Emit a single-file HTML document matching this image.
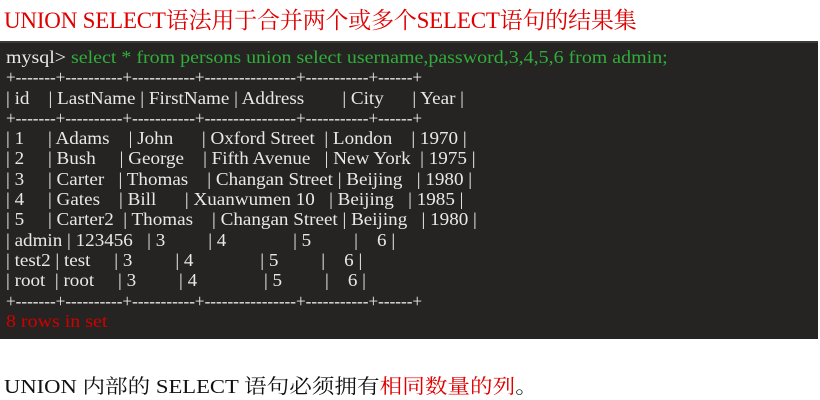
<!DOCTYPE html>
<html><head><meta charset="utf-8"><style>
body{margin:0;width:820px;height:400px;background:#fff;position:relative;overflow:hidden;font-family:"Liberation Serif","Noto Serif CJK SC",serif}
.t{position:absolute;left:4px;top:2px;font-size:23px;color:#e00000;white-space:nowrap;letter-spacing:-0.2px}
.box{position:absolute;left:0;top:41px;width:818px;height:296px;background:#262422;border-top:2px solid #3a3a3a}
.pre{position:absolute;left:6px;top:4px;font-size:17.5px;line-height:20.3px;color:#e8e8e8;white-space:pre}
.pre div{transform-origin:0 0;transform:scaleX(1.09);height:20.3px}
.pre div.f{transform:scaleX(1.14)}
.pre div.s{transform:scaleX(0.98)}
.g{color:#2fae3a}.r{color:#d00000}
.b{position:absolute;left:4px;top:370px;font-size:20px;color:#111;white-space:nowrap;transform-origin:0 0;transform:scaleX(1.13)}
.b span{color:#e00000}
</style></head><body>
<div class="t">UNION SELECT语法用于合并两个或多个SELECT语句的结果集</div>
<div class="box"><div class="pre"><div class="f">mysql&gt; <span class="g">select * from persons union select username,password,3,4,5,6 from admin;</span></div><div class="s">+-------+----------+-----------+----------------+-----------+------+</div><div>| id    | LastName | FirstName | Address        | City      | Year |</div><div class="s">+-------+----------+-----------+----------------+-----------+------+</div><div>| 1     | Adams    | John      | Oxford Street  | London    | 1970 |</div><div>| 2     | Bush     | George    | Fifth Avenue   | New York  | 1975 |</div><div>| 3     | Carter   | Thomas    | Changan Street | Beijing   | 1980 |</div><div>| 4     | Gates    | Bill      | Xuanwumen 10   | Beijing   | 1985 |</div><div>| 5     | Carter2  | Thomas    | Changan Street | Beijing   | 1980 |</div><div>| admin | 123456   | 3         | 4              | 5         |    6 |</div><div>| test2 | test     | 3         | 4              | 5         |    6 |</div><div>| root  | root     | 3         | 4              | 5         |    6 |</div><div class="s">+-------+----------+-----------+----------------+-----------+------+</div><div class="f"><span class="r">8 rows in set</span></div></div></div>
<div class="b">UNION 内部的 SELECT 语句必须拥有<span>相同数量的列</span>。</div>
</body></html>
